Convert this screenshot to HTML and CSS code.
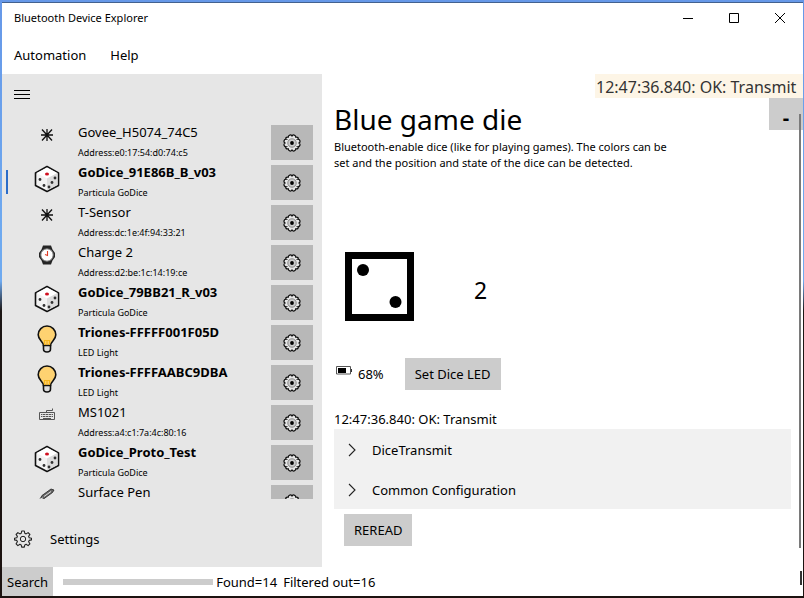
FILE: index.html
```
<!DOCTYPE html>
<html lang="en">
<head>
<meta charset="utf-8">
<title>Bluetooth Device Explorer</title>
<link rel="stylesheet" href="styles.css">
</head>
<body>
<svg class="sprite" aria-hidden="true">
  <symbol id="star" viewBox="0 0 14 14"><path d="M7 1v12M1 7h12M2 1.500l10 11M12 1.500L2 12.500" fill="none" stroke="#111" stroke-width="1.300"/></symbol>
  <symbol id="dice" viewBox="0 0 26 28">
    <path d="M13 1.500L24.500 8v12.500L13 26.500 1.500 20.500V8z" fill="#f2f2f2" stroke="#111" stroke-width="1.600" stroke-linejoin="round"/>
    <path d="M13 2.500L23.500 8 13 13.500 2.500 8z" fill="#fff"/><path d="M13 13.500L23.500 8v12L13 25.500z" fill="#dcdcdc"/>
    <ellipse cx="13" cy="9" rx="2" ry="1.500" fill="#d01020"/>
    <g fill="#333"><circle cx="6" cy="14.500" r="1.400"/><circle cx="10" cy="20.500" r="1.400"/><circle cx="21" cy="13" r="1.400"/><circle cx="18" cy="17.500" r="1.400"/><circle cx="15" cy="22" r="1.400"/></g>
  </symbol>
  <symbol id="watch" viewBox="0 0 18 20">
    <path d="M5 .5h8l1.500 4L17 8v4l-2.500 3.500-1.500 4H5l-1.500-4L1 12V8l2.500-3.500z" fill="#252525"/>
    <circle cx="9" cy="10" r="6.200" fill="#fff" stroke="#777"/><path d="M9.500 6v4.500L7 9.500" fill="none" stroke="#e03c28" stroke-width="1.100"/>
  </symbol>
  <symbol id="bulb" viewBox="0 0 20 28">
    <path d="M6.500 20v4q0 3 3.500 3t3.500-3v-4" fill="#ddd" stroke="#111" stroke-width="1.600"/>
    <path d="M6.500 20.500C6 16 1.200 15 1.200 9.800a8.800 8.800 0 0 1 17.600 0c0 5.200-4.800 6.200-5.300 10.700z" fill="#fed271" stroke="#111" stroke-width="1.600"/>
    <path d="M7.500 20v-5M10 20v-5M12.500 20v-5M7 15.500h6" stroke="#f7b51c" stroke-width="1.200"/>
  </symbol>
  <symbol id="keyboard" viewBox="0 0 16 12">
    <path d="M.5 4.500h15v7H.5zM7.500 4.500v-2h6V.5M2 6.500h12M2 8.500h12M4 10.500h8" fill="none" stroke="#555"/>
    <path d="M3.500 5v5M6.500 5v5M9.500 5v5M12.500 5v5" stroke="#e6e6e6" stroke-width=".6"/>
  </symbol>
  <symbol id="pen" viewBox="0 0 16 12"><path d="M1 11l2-3.500L12 1l3 1-1.500 2.500L4.500 11z" fill="#666" stroke="#222" stroke-width=".8"/><path d="M5 8.500l7-5M1 11l3-1" stroke="#ddd"/></symbol>
  <symbol id="cog" viewBox="0 0 18 18">
    <path d="M9 2C10 .3 12.700.8 12.800 3.200C14.800 2.700 16 4.500 14.800 5.200C17.200 5.300 17.700 8 16 9C17.700 10 17.200 12.700 14.800 12.800C16 13.500 14.800 15.300 12.800 14.800C12.700 17.200 10 17.700 9 16C8 17.700 5.300 17.200 5.200 14.800C3.200 15.300 2 13.500 3.200 12.800C.8 12.700.3 10 2 9C.3 8 .8 5.300 3.200 5.200C2 4.500 3.200 2.700 5.200 3.200C5.300.8 8 .3 9 2Z" fill="#e6e6e6" stroke="#111" stroke-width="1.200"/>
    <circle cx="9" cy="9" r="4.200" fill="#ccc" stroke="#888"/><circle cx="9" cy="9" r="1.900" fill="#000"/>
  </symbol>
  <symbol id="gear" viewBox="0 0 18 18">
    <path d="M7.700 1h2.600l.5 2.300 1.300.6 2-1.300 1.800 1.900-1.300 1.900.6 1.400 2.300.4v1.700l-2.300.5-.6 1.400 1.300 2-1.800 1.800-2-1.300-1.300.6-.5 2.200H7.700l-.5-2.200-1.300-.6-2 1.300-1.800-1.800 1.300-2-.6-1.400-2.300-.5V8.200l2.300-.4.6-1.400-1.300-1.900 1.800-1.900 2 1.300 1.300-.6z" fill="none" stroke="#222" stroke-width="1.100" stroke-linejoin="round"/>
    <circle cx="9" cy="9" r="2.700" fill="none" stroke="#222"/>
  </symbol>
  <symbol id="chevron" viewBox="0 0 8 14"><path d="M1 1l6 6-6 6" fill="none" stroke="#222" stroke-width="1.100"/></symbol>
</svg>
<div class="window">
  <header class="titlebar">
    <h1>Bluetooth Device Explorer</h1>
    <div class="caption">
      <button aria-label="Minimize"><svg width="10" height="10"><path d="M0 5.500h10" stroke="#000"/></svg></button>
      <button aria-label="Maximize"><svg width="10" height="10"><path d="M.5.5h9v9h-9z" fill="none" stroke="#000"/></svg></button>
      <button aria-label="Close"><svg width="10" height="10"><path d="M0 0l10 10M10 0L0 10" stroke="#000"/></svg></button>
    </div>
  </header>
  <nav class="menu"><button>Automation</button><button>Help</button></nav>
  <div class="body">
    <aside class="sidebar">
      <button class="burger" aria-label="Toggle navigation"><svg width="16" height="10"><path d="M0 .5h16M0 4.500h16M0 8.500h16" stroke="#000"/></svg></button>
      <ul class="devices">
        <li><svg class="i14"><use href="#star"/></svg><div><span class="name">Govee_H5074_74C5</span><small>Address:e0:17:54:d0:74:c5</small></div><button aria-label="Configure"><svg><use href="#cog"/></svg></button></li>
        <li class="known selected"><svg class="i28"><use href="#dice"/></svg><div><span class="name">GoDice_91E86B_B_v03</span><small>Particula GoDice</small></div><button aria-label="Configure"><svg><use href="#cog"/></svg></button></li>
        <li><svg class="i14"><use href="#star"/></svg><div><span class="name">T-Sensor</span><small>Address:dc:1e:4f:94:33:21</small></div><button aria-label="Configure"><svg><use href="#cog"/></svg></button></li>
        <li><svg class="i20"><use href="#watch"/></svg><div><span class="name">Charge 2</span><small>Address:d2:be:1c:14:19:ce</small></div><button aria-label="Configure"><svg><use href="#cog"/></svg></button></li>
        <li class="known"><svg class="i28"><use href="#dice"/></svg><div><span class="name">GoDice_79BB21_R_v03</span><small>Particula GoDice</small></div><button aria-label="Configure"><svg><use href="#cog"/></svg></button></li>
        <li class="known"><svg class="i28"><use href="#bulb"/></svg><div><span class="name">Triones-FFFFF001F05D</span><small>LED Light</small></div><button aria-label="Configure"><svg><use href="#cog"/></svg></button></li>
        <li class="known"><svg class="i28"><use href="#bulb"/></svg><div><span class="name">Triones-FFFFAABC9DBA</span><small>LED Light</small></div><button aria-label="Configure"><svg><use href="#cog"/></svg></button></li>
        <li><svg class="i12"><use href="#keyboard"/></svg><div><span class="name">MS1021</span><small>Address:a4:c1:7a:4c:80:16</small></div><button aria-label="Configure"><svg><use href="#cog"/></svg></button></li>
        <li class="known"><svg class="i28"><use href="#dice"/></svg><div><span class="name">GoDice_Proto_Test</span><small>Particula GoDice</small></div><button aria-label="Configure"><svg><use href="#cog"/></svg></button></li>
        <li><svg class="i12"><use href="#pen"/></svg><div><span class="name">Surface Pen</span></div><button aria-label="Configure"><svg><use href="#cog"/></svg></button></li>
      </ul>
      <button class="settings"><svg><use href="#gear"/></svg>Settings</button>
    </aside>
    <main class="content">
      <div class="toast">
        <p>12:47:36.840: OK: Transmit</p>
        <button aria-label="Collapse log">-</button>
      </div>
      <div class="scrollbar"></div>
      <h2>Blue game die</h2>
      <p class="about">Bluetooth-enable dice (like for playing games). The colors can be set and the position and state of the dice can be detected.</p>
      <div class="face">
        <svg width="70" height="70" viewBox="0 0 70 70"><path d="M4.500 4.500h62v62h-62z" fill="#fff" stroke="#000" stroke-width="7"/><circle cx="19" cy="19" r="6" /><circle cx="51.500" cy="51" r="6"/></svg>
        <output>2</output>
      </div>
      <div class="status">
        <svg width="16" height="9"><path d="M.5.5h14v7.500H.5z" fill="#fff" stroke="#555"/><path d="M2 2h8v5H2z"/><path d="M15.500 3v3" stroke="#333"/></svg>
        <span>68%</span>
        <button class="btn">Set Dice LED</button>
      </div>
      <p class="log">12:47:36.840: OK: Transmit</p>
      <div class="expanders">
        <button aria-expanded="false"><svg><use href="#chevron"/></svg>DiceTransmit</button>
        <button aria-expanded="false"><svg><use href="#chevron"/></svg>Common Configuration</button>
      </div>
      <button class="btn reread">REREAD</button>
    </main>
  </div>
  <footer class="statusbar">
    <button class="search">Search</button>
    <progress value="0" max="100" aria-label="Search progress"></progress>
    <span>Found=14</span><span>Filtered out=16</span>
    <i class="grip"></i>
  </footer>
</div>
</body>
</html>
```
FILE: styles.css
```
* { box-sizing: border-box; }
body {
  margin: 0;
  height: 100vh;
  padding: 3px 1px 2px 2px;
  background: linear-gradient(#6698e8 0, #6faaf0 40%, #6faaf0 47%, #1c1614 52%, #1c1210 100%);
  font: 13px/20px "Noto Sans", "Open Sans", sans-serif;
  color: #000;
}
h1, h2, p, ul { margin: 0; padding: 0; font-weight: 400; }
button {
  border: 0;
  padding: 0;
  background: none;
  font: inherit;
  color: inherit;
}
.sprite { display: none; }
.window {
  display: flex;
  flex-direction: column;
  height: 100%;
  background: #fff;
  overflow: hidden;
  box-shadow: 0 -1px #42618f;
}
.titlebar { display: flex; justify-content: space-between; height: 30px; padding-left: 12px; }
.titlebar h1 { font-size: 11px; line-height: 30px; }
.caption { display: flex; }
.caption button { display: grid; place-items: center; width: 46px; }
.menu { display: flex; gap: 24px; height: 41px; padding: 2px 12px 0; }
.body { display: flex; flex: 1; min-height: 0; }
.sidebar {
  display: flex;
  flex-direction: column;
  width: 320px;
  flex-shrink: 0;
  background: #e6e6e6;
}
.burger { display: flex; padding: 16px 12px 22px; }
.devices { flex: 1; min-height: 0; overflow: hidden; list-style: none; }
.devices li {
  display: grid;
  grid-template-columns: 64px 1fr 42px;
  column-gap: 6px;
  height: 40px;
  padding-right: 9px;
}
.devices li > svg { width: 28px; margin-left: 31px; }
.i12 { height: 12px; margin-top: 6px; }
.i14 { height: 14px; margin-top: 6px; }
.i20 { height: 20px; margin-top: 3px; }
.i28 { height: 28px; margin-top: 3px; }
.devices li > div { margin-left: 6px; white-space: nowrap; }
.name, .devices small { display: block; }
.devices small { font-size: 9px; line-height: 22px; }
.known .name { font-weight: 700; }
.selected { position: relative; }
.selected::before {
  content: "";
  position: absolute;
  left: 4px;
  top: 8px;
  width: 2px;
  height: 24px;
  background: #2b6cc8;
}
.devices button { display: grid; place-items: center; height: 35px; margin-top: 3px; background: #b8b8b8; }
.devices button svg { width: 18px; height: 18px; }
.settings { display: flex; align-items: center; gap: 18px; height: 40px; margin: 20px 12px 8px; text-align: left; }
.settings svg { width: 18px; height: 18px; }
.content { position: relative; flex: 1; min-width: 0; padding: 26px 12px 0; overflow: hidden; }
.toast { position: absolute; top: 0; left: 273px; right: 0; }
.toast p { height: 24px; padding-left: 1px; background: #fdf5e6; color: #333; font-size: 16px; line-height: 26px; white-space: nowrap; }
.toast button { display: block; width: 34px; height: 32px; margin-left: auto; padding-top: 8px; background: #ccc; font-size: 20px; font-weight: 700; }
.scrollbar { position: absolute; top: 40px; right: 2px; bottom: 19px; width: 2px; background: #7a7a7a; }
.content h2 { font-size: 28px; line-height: 39px; }
.about { max-width: 346px; font-size: 11px; line-height: 16px; }
.face { display: flex; align-items: center; gap: 60px; padding: 76px 10px 0; }
.face svg { display: block; }
.face output { font-size: 23px; line-height: 70px; margin-top: 8px; }
.status { display: flex; align-items: center; padding: 33px 2px 0; }
.status svg { margin: 0 6px 8px 0; }
.status .btn { margin-left: 21px; }
.btn { height: 32px; padding: 0 10px; background: #ccc; }
.log { margin-top: 20px; line-height: 19px; }
.expanders { background: #f1f1f1; }
.expanders button { display: flex; align-items: center; gap: 16px; width: 100%; height: 40px; padding: 2px 14px 0; }
.expanders svg { width: 8px; height: 14px; }
.reread { margin: 5px 10px; }
.statusbar { display: flex; align-items: center; height: 29px; }
.search { height: 29px; padding: 0 5px; background: #ccc; }
progress { appearance: none; width: 150px; height: 6px; margin: 0 3px 0 10px; border: 0; background: #ccc; }
progress::-webkit-progress-bar { background: #ccc; }
.statusbar span { margin-right: 6px; }
.grip { width: 2px; height: 14px; margin: 0 1px 8px auto; background: #333; }
```
